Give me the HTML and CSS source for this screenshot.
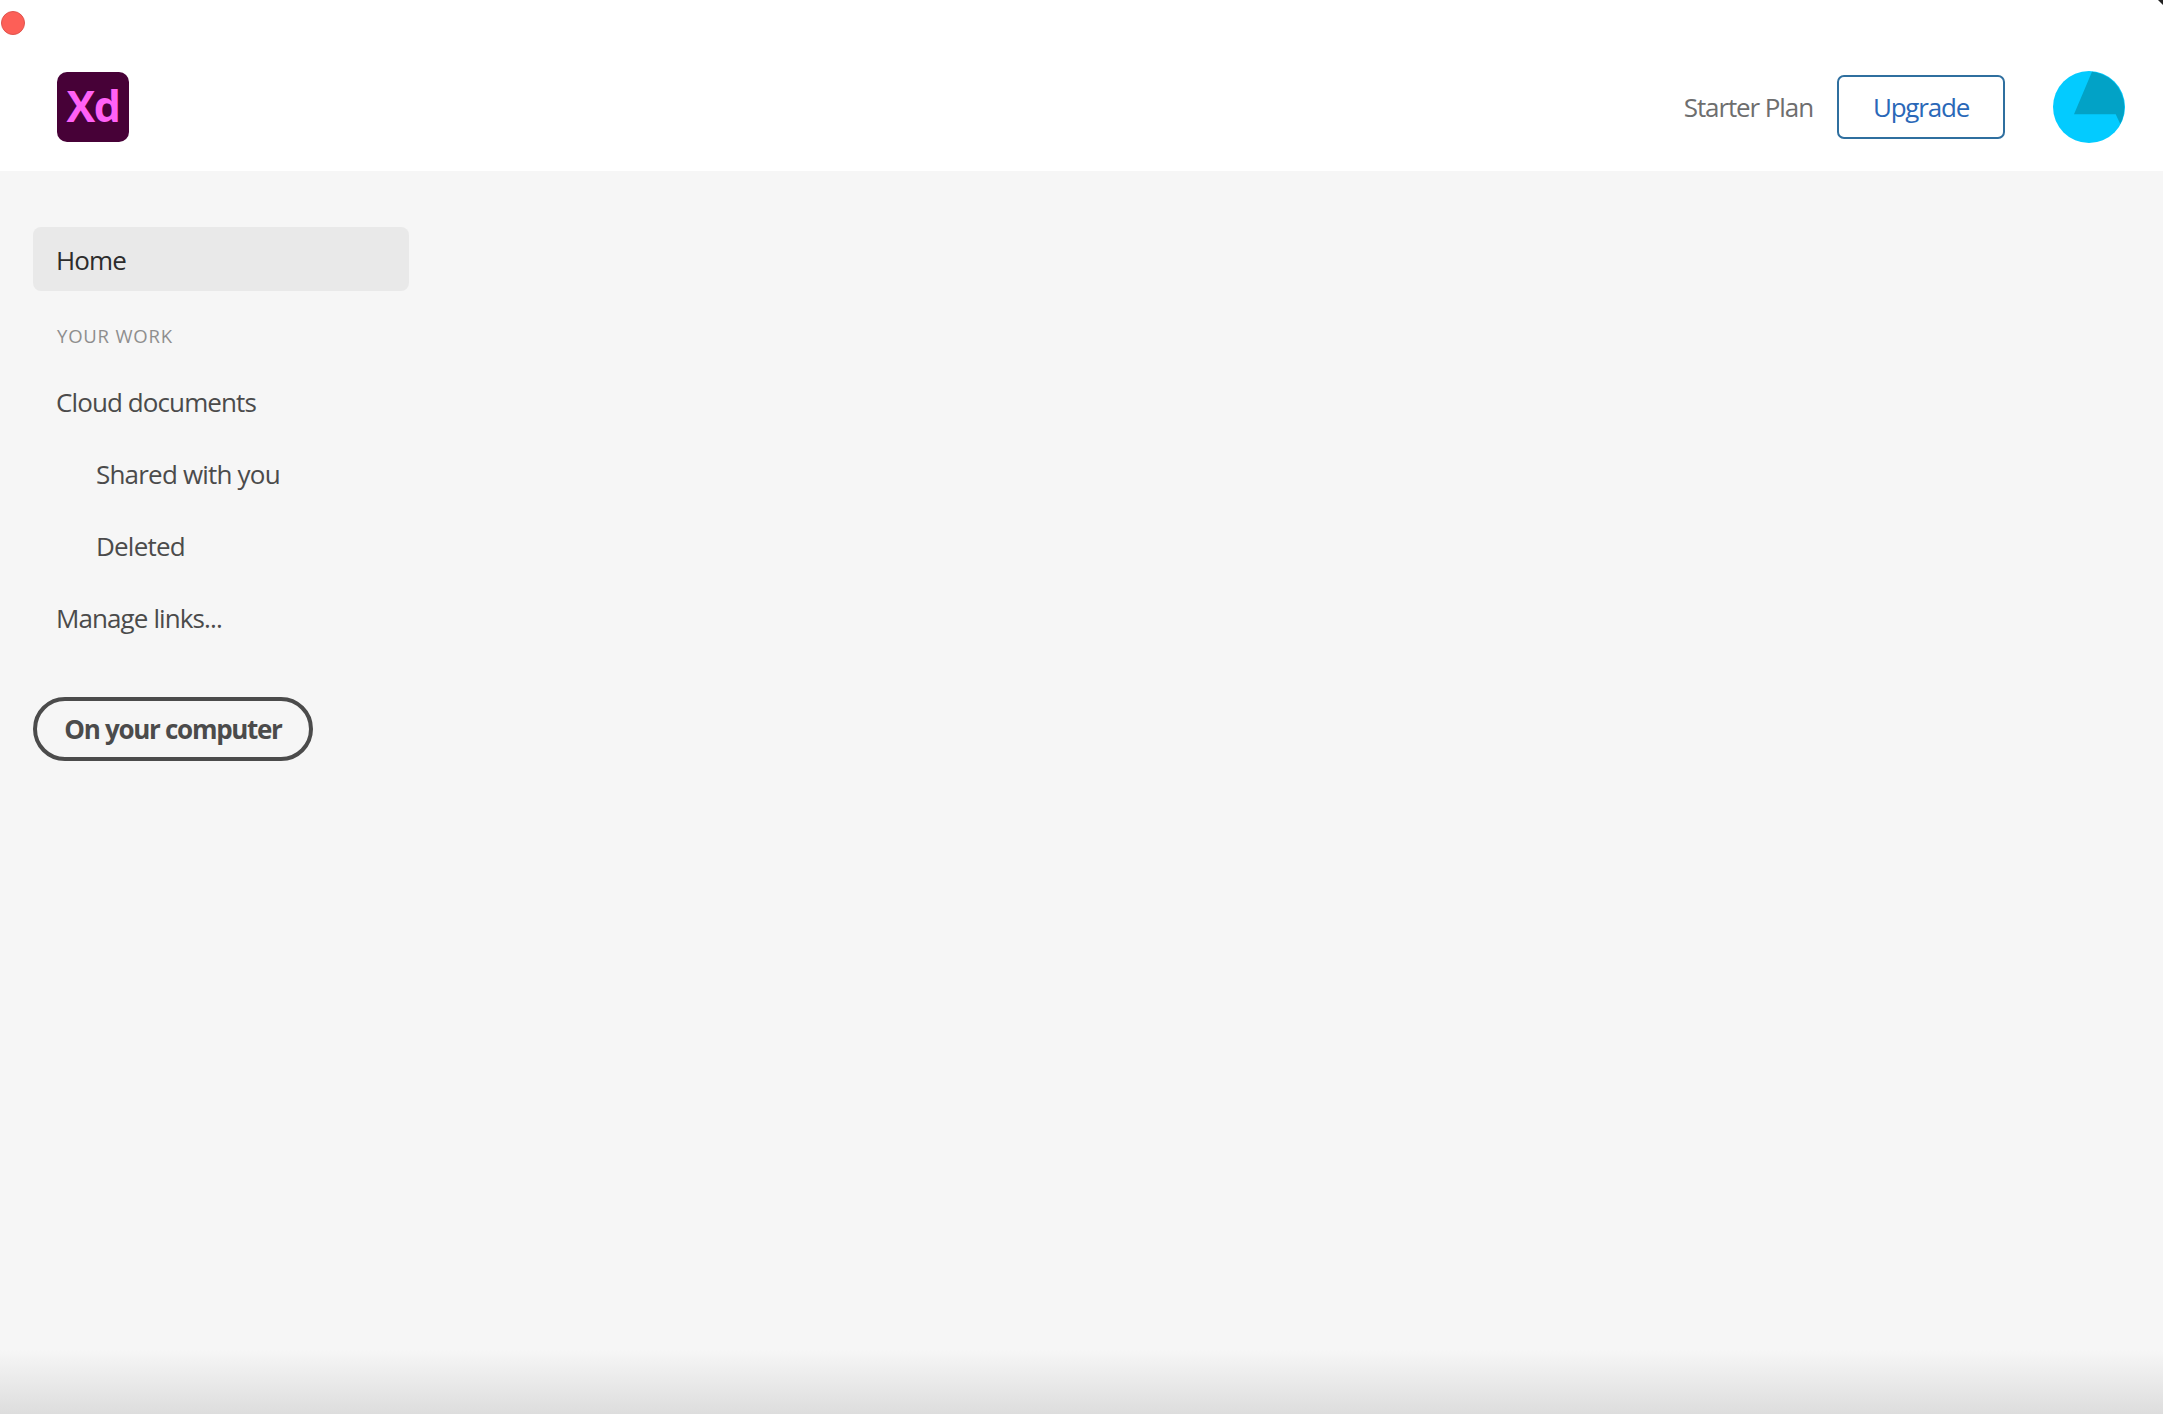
FILE: index.html
```html
<!DOCTYPE html>
<html lang="en">
<head>
  <meta charset="UTF-8" />
  <title>Adobe XD Home</title>
  <link rel="stylesheet" href="styles.css">
</head>
<body>
  <span class="close-dot"></span>
  <span class="corner"></span>

  <header>
    <div class="logo">Xd</div>
    <div class="account">
      <span class="plan">Starter Plan</span>
      <a class="upgrade" href="#upgrade">Upgrade</a>
      <svg class="avatar" width="72" height="72" viewBox="0 0 72 72">
        <circle cx="36" cy="36" r="36" fill="#03cbff" />
        <path d="M39 .7 21 43.3H62.7L67.3 53A36 36 0 0 0 39 .7Z" fill="#02a2c6" />
      </svg>
    </div>
  </header>

  <nav>
    <a class="nav-item active" href="#home">Home</a>
    <h2>YOUR WORK</h2>
    <a class="nav-item" href="#cloud">Cloud documents</a>
    <a class="nav-item sub" href="#shared">Shared with you</a>
    <a class="nav-item sub" href="#deleted">Deleted</a>
    <a class="nav-item" href="#links">Manage links...</a>
    <a class="computer" href="#computer">On your computer</a>
  </nav>

  <div class="bottom-fade"></div>
</body>
</html>
```

FILE: styles.css
```css
* {
  margin: 0;
  padding: 0;
  box-sizing: border-box;
  font-family: 'Open Sans', sans-serif;
}
html, body {
  height: 100%;
}
body {
  background: #f6f6f6;
  overflow: hidden;
}
a {
  text-decoration: none;
}
.close-dot {
  position: absolute;
  top: 11px;
  left: 1px;
  width: 24px;
  height: 24px;
  border-radius: 50%;
  background: #fd5f57;
  border: 1px solid #e0544e;
}
.corner {
  position: absolute;
  top: 0;
  right: 0;
  width: 0;
  height: 0;
  border-top: 5px solid #222;
  border-left: 5px solid transparent;
}
.bottom-fade {
  position: absolute;
  left: 0;
  right: 0;
  bottom: 0;
  height: 64px;
  background: linear-gradient(#f6f6f600, #dddddd);
}
header {
  height: 171px;
  background: #fff;
  padding: 43px 38px 0 57px;
  display: flex;
  justify-content: space-between;
  align-items: center;
}
.logo {
  width: 72px;
  height: 70px;
  border-radius: 10px;
  background: #470137;
  color: #ff61f6;
  font-size: 43px;
  font-weight: 700;
  letter-spacing: -1.5px;
  line-height: 68px;
  text-align: center;
}
.account {
  display: flex;
  align-items: center;
}
.plan {
  font-size: 26px;
  color: #6e6e6e;
  letter-spacing: -1.1px;
  margin-right: 24px;
}
.upgrade {
  width: 168px;
  height: 64px;
  border: 2px solid #2f6f9f;
  border-radius: 7px;
  color: #2a68b8;
  font-size: 26px;
  letter-spacing: -1.2px;
  display: flex;
  align-items: center;
  justify-content: center;
  margin-right: 48px;
}
nav {
  padding: 56px 0 0 33px;
  display: flex;
  flex-direction: column;
  align-items: flex-start;
}
.nav-item {
  width: 376px;
  height: 64px;
  margin-bottom: 8px;
  padding-left: 23px;
  border-radius: 8px;
  color: #4b4b4b;
  font-size: 26px;
  letter-spacing: -0.9px;
  line-height: 66px;
}
.nav-item.active {
  background: #e9e9e9;
  color: #2c2c2c;
}
.nav-item.sub {
  padding-left: 63px;
  letter-spacing: -0.8px;
}
nav h2 {
  height: 62px;
  margin-bottom: 8px;
  padding: 11px 0 0 24px;
  color: #8e8e8e;
  font-size: 18.5px;
  font-weight: 400;
  letter-spacing: 0.8px;
  line-height: 52px;
}
.computer {
  width: 280px;
  height: 64px;
  margin-top: 40px;
  border: 4px solid #4b4b4b;
  border-radius: 32px;
  color: #4b4b4b;
  font-size: 26px;
  font-weight: 700;
  letter-spacing: -1.3px;
  display: flex;
  align-items: center;
  justify-content: center;
}
```
